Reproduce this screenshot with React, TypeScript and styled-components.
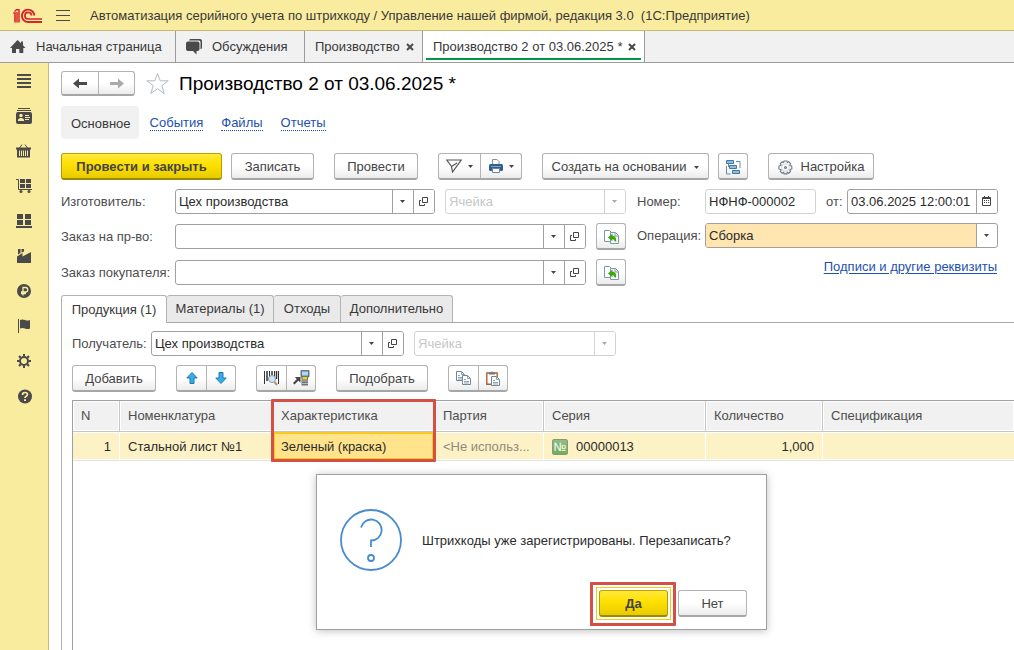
import React from "react";
import styled, { createGlobalStyle, css } from "styled-components";

const GlobalStyle = createGlobalStyle`
  *, *::before, *::after { box-sizing: border-box; }
  body {
    margin: 0;
    background: #fff;
    color: #383838;
    font: 13px/16px "Liberation Sans", Arial, sans-serif;
  }
  button, input, select { font: inherit; color: inherit; margin: 0; }
  svg { display: block; flex: none; }
`;

/* ---------- shell ---------- */

const Page = styled.div`
  position: relative;
  display: flex;
  flex-direction: column;
  min-height: 100vh;
  overflow: hidden;
`;

const TitleBar = styled.header`
  display: flex;
  align-items: center;
  height: 31px;
  padding: 1px 0 0 13px;
  background: #faec9f;
  border-bottom: 1px solid #c6ba77;
`;

const MenuButton = styled.button`
  padding: 0;
  margin: 0 20px 0 13px;
  border: 0;
  background: none;
`;

const WindowTabs = styled.nav`
  display: flex;
  height: 32px;
  background: #f1f1f1;
  border-bottom: 1px solid #9c9c9c;
`;

const WindowTab = styled.button<{ $width: number; $active?: boolean }>`
  position: relative;
  display: flex;
  align-items: center;
  justify-content: space-between;
  flex: none;
  width: ${(p) => p.$width}px;
  padding: 0 8px 0 10px;
  border: 0;
  border-right: 1px solid #9c9c9c;
  background: ${(p) => (p.$active ? "#fff" : "transparent")};
  white-space: nowrap;
  ${(p) =>
    p.$active &&
    css`
      &::after {
        content: "";
        position: absolute;
        left: 3px;
        right: 3px;
        bottom: 2px;
        height: 2px;
        background: #009646;
      }
    `}
`;

const TabWithIcon = styled(WindowTab)`
  justify-content: flex-start;
  gap: 10px;
`;

const Body = styled.div`
  display: flex;
  flex: 1;
`;

const Sidebar = styled.nav`
  display: flex;
  flex-direction: column;
  flex: none;
  width: 49px;
  background: #faec9f;
  border-right: 1px solid #c6ba77;
`;

const SideButton = styled.button`
  display: flex;
  align-items: center;
  justify-content: center;
  height: 35px;
  padding: 0;
  border: 0;
  background: none;
`;

const Main = styled.main`
  display: flex;
  flex-direction: column;
  flex: 1;
  min-width: 0;
  padding: 8px 0 0 12px;
`;

/* ---------- buttons ---------- */

const raised = css`
  height: 27px;
  border: 1px solid #b3b3b3;
  border-bottom: 2px solid #a6a6a6;
  border-radius: 3px;
  background: linear-gradient(#fff 0%, #fff 50%, #ececec 100%);
`;

const Button = styled.button<{ $width: number }>`
  ${raised}
  display: flex;
  align-items: center;
  justify-content: center;
  gap: 8px;
  flex: none;
  width: ${(p) => p.$width}px;
  padding: 2px 0 0;
  color: #444;
  white-space: nowrap;
`;

const PrimaryButton = styled(Button)`
  border-color: #b9a400 #b09c00 #9b8900;
  background: linear-gradient(#ffe93a 0%, #ffe000 45%, #e8cb00 100%);
  font-weight: bold;
`;

const Split = styled.div`
  ${raised}
  display: flex;
  flex: none;
`;

const SplitButton = styled.button<{ $width: number }>`
  display: flex;
  align-items: center;
  justify-content: center;
  gap: 6px;
  width: ${(p) => p.$width}px;
  padding: 0;
  border: 0;
  background: none;
  & + & { border-left: 1px solid #b3b3b3; }
`;

const Toolbar = styled.div`
  display: flex;
  gap: 20px;
`;

const ButtonGroup = styled.div`
  display: flex;
  gap: 9px;
`;

/* ---------- heading ---------- */

const Heading = styled.div`
  display: flex;
  align-items: center;
  height: 25px;
`;

const History = styled(Split)`
  height: 25px;
`;

const StarButton = styled.button`
  margin: 0 9px 0 10px;
  padding: 0;
  border: 0;
  background: none;
`;

const Title = styled.h1`
  margin: 0;
  color: #000;
  font-size: 19px;
  font-weight: normal;
  line-height: 24px;
`;

const Sections = styled.nav`
  display: flex;
  align-items: center;
  gap: 18px;
  margin: 10px 0 14px;
`;

const CurrentSection = styled.span`
  padding: 10px 8px 7px 10px;
  margin-right: -7px;
  border-radius: 4px;
  background: #f1f1f1;
`;

const SectionLink = styled.a`
  padding-top: 2px;
  color: #1d50b0;
  text-decoration: none;
  line-height: 14px;
  border-bottom: 1px dotted #1d50b0;
`;

/* ---------- form ---------- */

const Form = styled.div`
  display: grid;
  grid-template-columns: minmax(0, 1fr) 361px;
  column-gap: 11px;
  margin: 9px 16px 9px 0;
`;

const FormColumn = styled.div`
  display: flex;
  flex-direction: column;
  gap: 9px;
`;

const FormRow = styled.div<{ $tall?: boolean }>`
  display: flex;
  align-items: center;
  height: ${(p) => (p.$tall ? 27 : 25)}px;
`;

const Label = styled.label<{ $width?: number }>`
  flex: none;
  width: ${(p) => (p.$width ? `${p.$width}px` : "auto")};
  color: #4d4d4d;
  white-space: nowrap;
`;

const FieldBox = styled.div<{ $width?: number; $muted?: boolean; $filled?: boolean; $spaced?: boolean }>`
  display: flex;
  flex: ${(p) => (p.$width ? `0 0 ${p.$width}px` : "1")};
  min-width: 0;
  height: 25px;
  margin-right: ${(p) => (p.$spaced ? 10 : 0)}px;
  border: 1px solid ${(p) => (p.$muted ? "#d2d2d2" : "#a0a0a0")};
  border-radius: 3px;
  background: #fff;
  overflow: hidden;
  > button, > span { border-left: 1px solid ${(p) => (p.$muted ? "#d2d2d2" : "#a0a0a0")}; }
  > select { background: ${(p) => (p.$filled ? "#ffe6b0" : "#fff")}; }
`;

const control = css`
  flex: 1;
  width: 0;
  min-width: 0;
  padding: 0 3px;
  border: 0;
  outline: 0;
  color: #2b2b2b;
`;

const TextInput = styled.input`
  ${control}
  background: none;
  &::placeholder { color: #c6c6c6; opacity: 1; }
`;

const Select = styled.select`
  ${control}
  appearance: none;
`;

const FieldButton = styled.button`
  display: flex;
  align-items: center;
  justify-content: center;
  width: 21px;
  padding: 0 1px 1px 0;
  border: 0;
  background: #fff;
`;

const SelectArrow = styled.span`
  display: flex;
  align-items: center;
  justify-content: center;
  width: 21px;
  padding: 0 1px 1px 0;
`;

const DetailsLink = styled.a`
  align-self: flex-end;
  margin-right: 1px;
  color: #1d50b0;
  line-height: 20px;
  text-underline-offset: 2px;
`;

/* ---------- tab panel ---------- */

const TabList = styled.div`
  display: flex;
  height: 28px;
  border-bottom: 1px solid #a8a8a8;
`;

const Tab = styled.button<{ $width: number; $active?: boolean }>`
  width: ${(p) => p.$width}px;
  height: ${(p) => (p.$active ? 28 : 27)}px;
  padding: 0;
  border: 1px solid #b3b3b3;
  border-left-width: ${(p) => (p.$active ? 1 : 0)}px;
  border-bottom: 0;
  border-radius: 3px 3px 0 0;
  background: ${(p) => (p.$active ? "#fff" : "#eaeaea")};
`;

const Panel = styled.section`
  display: flex;
  flex: 1;
  flex-direction: column;
  gap: 9px;
  padding: 8px 0 0 10px;
  border-left: 1px solid #b3b3b3;
`;

const TableArea = styled.div`
  flex: 1;
  margin-top: -1px;
  border-top: 1px solid #a0a0a0;
  border-left: 1px solid #a0a0a0;
`;

const Table = styled.table`
  width: 100%;
  table-layout: fixed;
  border-spacing: 0;
`;

const HeadCell = styled.th<{ $width?: number; $marked?: boolean }>`
  position: relative;
  width: ${(p) => (p.$width ? `${p.$width}px` : "auto")};
  height: 31px;
  padding: 0 8px;
  border-right: 1px solid #c6c6c6;
  border-bottom: 1px solid #c6c6c6;
  background: #f1f1f1;
  box-shadow: inset 0 0 0 1px #fff;
  color: #4d4d4d;
  font-weight: normal;
  text-align: left;
  &:last-child { border-right: 0; }
  ${(p) =>
    p.$marked &&
    css`
      &::after {
        content: "";
        position: absolute;
        z-index: 1;
        top: -2px;
        left: -2px;
        right: -2px;
        height: 63px;
        border: 3px solid #d25045;
        border-radius: 1px;
      }
    `}
`;

const Cell = styled.td<{ $right?: boolean; $muted?: boolean; $current?: boolean }>`
  height: 29px;
  padding: 1px 8px 0;
  border-right: 1px solid #fff;
  border-bottom: 1px solid #e2e2e2;
  background: ${(p) => (p.$current ? "#ffe48c" : "#fdf1c6")};
  box-shadow: ${(p) => (p.$current ? "inset 0 0 0 2px #fac81e" : "inset 0 1px #fff, inset 0 -1px #fff")};
  color: ${(p) => (p.$muted ? "#8f8a7c" : "#2b2b2b")};
  text-align: ${(p) => (p.$right ? "right" : "left")};
  white-space: nowrap;
  &:last-child { border-right: 0; }
`;

const Series = styled.span`
  display: flex;
  align-items: center;
  gap: 8px;
`;

const SeriesBadge = styled.span`
  display: flex;
  align-items: center;
  justify-content: center;
  width: 16px;
  height: 16px;
  border: 1px solid #8b9586;
  border-radius: 2px;
  background: linear-gradient(#93bd80, #6fae52);
  color: #fff;
  font-size: 12px;
  line-height: 14px;
`;

/* ---------- dialog ---------- */

const Dialog = styled.div`
  position: absolute;
  z-index: 2;
  top: 474px;
  left: 316px;
  display: flex;
  flex-direction: column;
  width: 451px;
  height: 156px;
  padding: 34px 19px 12px 23px;
  border: 1px solid #a0a0a0;
  background: #fff;
  box-shadow: 0 1px 8px rgba(0, 0, 0, 0.25);
`;

const Message = styled.div`
  display: flex;
  align-items: center;
  gap: 20px;
  color: #2b2b2b;
`;

const MessageText = styled.span`
  padding-top: 2px;
`;

const DialogActions = styled.div`
  display: flex;
  justify-content: flex-end;
  gap: 10px;
  margin-top: auto;
`;

const FocusFrame = styled.div`
  position: relative;
  &::before, &::after {
    content: "";
    position: absolute;
    pointer-events: none;
  }
  &::before { inset: -3px; border: 1px solid #f5c814; }
  &::after { inset: -8px -8px -9px -9px; border: 3px solid #d25045; border-radius: 1px; }
`;

/* ---------- icons ---------- */

const dark = "#4a4a4a";

const Logo = () => (
  <svg width="30" height="16" viewBox="0 0 30 16" fill="none" stroke="#d8232a">
    <path d="M.3 5H2v9.500" strokeWidth="1.600" />
    <path d="M1.500 3.500 3.500 1.800H6V14.500M4 4v10.500" strokeWidth="1.500" />
    <path d="M21.300 7.500a6.200 6.200 0 1 0-6.200 6.500H29" strokeWidth="1.900" />
    <path d="M18.500 7.500a3.300 3.300 0 1 0-3.400 3.500H29" strokeWidth="1.700" />
  </svg>
);

const Burger = () => (
  <svg width="14" height="12" viewBox="0 0 14 12" stroke={dark}>
    <path d="M0 .5h14M0 5.500h14M0 10.500h14" />
  </svg>
);

const Home = () => (
  <svg width="16" height="14" viewBox="0 0 16 14" fill={dark}>
    <path d="M7.500 0 11 3.300V1.500h2v3.700L15.500 8H13.300v5H9.300V9H6v4H2V8H0z" />
  </svg>
);

const Chat = () => (
  <svg width="16" height="16" viewBox="0 0 16 16" fill={dark}>
    <path d="M4.500 0H14q2 0 2 2v6.500q0 1.500-1.500 1.700V3q0-1.500-1.500-1.500H3Q3.200 0 4.500 0z" />
    <path d="M2 2.500h9.500q2 0 2 2v5.500q0 2-2 2H10.500V15.500L7 12H2q-2 0-2-2V4.500q0-2 2-2z" />
  </svg>
);

const Close = () => (
  <svg width="8" height="8" viewBox="0 0 8 8" stroke={dark} strokeWidth="2">
    <path d="m1 1 6 6M7 1 1 7" />
  </svg>
);

const Arrow = ({ back, muted }: { back?: boolean; muted?: boolean }) => (
  <svg width="14" height="11" viewBox="0 0 14 11" fill={muted ? "#aaa" : dark}>
    <path d={back ? "M0 5.500 6 .5V4h8v3H6v3.500z" : "M14 5.500 8 .5V4H0v3h8v3.500z"} />
  </svg>
);

const Star = () => (
  <svg width="25" height="23" viewBox="0 0 25 23" fill="#fff" stroke="#b4bac4">
    <path d="m12.500 1.500 2.700 7.300h8l-6.400 4.900 2.400 7.800-6.700-4.700-6.700 4.700 2.400-7.800-6.400-4.900h8z" />
  </svg>
);

const Caret = ({ muted }: { muted?: boolean }) => (
  <svg width="5" height="3" viewBox="0 0 5 3" fill={muted ? "#aaa" : "#444"}>
    <path d="M0 0h5L2.500 3z" />
  </svg>
);

const OpenIcon = () => (
  <svg width="9" height="9" viewBox="0 0 9 9" fill="none" stroke="#444">
    <path d="M3.500.5h5v5h-5zM2 3.500H.5v5h5V7" />
  </svg>
);

const Calendar = () => (
  <svg width="9" height="10" viewBox="0 0 9 10" fill="none" stroke="#444">
    <path d="M.5 1.500h8v8h-8zM0 2.500h9M2.500 0v2M6.500 0v2M2 4.500h1M4 4.500h1M6 4.500h1M2 6.500h1M4 6.500h1M6 6.500h1" />
  </svg>
);

const Send = () => (
  <svg width="16" height="14" viewBox="0 0 16 14" fill="none" stroke="#555" strokeWidth="1.200">
    <path d="M.7 1h14.500L6.500 13 5.500 7.500zM5.500 7.500 11 4M.7 1l4.800 6.500" />
  </svg>
);

const Printer = () => (
  <svg width="14" height="15" viewBox="0 0 14 15">
    <path d="M3.500 6V.5h4.500l2 2V6" fill="#fff" stroke="#7c93a8" />
    <rect y="5" width="14" height="7" rx="1.500" fill="#2f5f8c" />
    <path d="M2 7.500h10" stroke="#7fa5c6" />
    <path d="M3.500 9.500h7v4h-7z" fill="#fff" stroke="#6c859c" />
  </svg>
);

const Structure = () => (
  <svg width="15" height="15" viewBox="0 0 15 15" fill="none">
    <path d="M10 1.500h4V8M.5 6v8h4M2.500 4v3" stroke="#5f8cae" />
    <path d="M.5.5h7v3h-7zM3.500 5.500h7v3h-7zM6.500 10.500h7v3h-7z" fill="#8dbcdc" stroke="#3f78a5" />
  </svg>
);

const SettingsIcon = () => (
  <svg width="15" height="15" viewBox="0 0 16 16" fill="none" stroke="#737984" strokeWidth="1.200">
    <path d="M6.500 1h3l.4 1.700 1.500-.8 2 2-.9 1.600L14.700 6.500v3l-2.200.9.9 1.700-2 2-1.500-.9-.4 1.600h-3l-.5-1.600-1.500.9-2-2 .9-1.700L1 9.500v-3l2.400-1-.9-1.600 2-2 1.500.8z" />
    <circle cx="8" cy="8" r="4" stroke="#d4d7db" />
    <circle cx="8" cy="8" r="1" />
  </svg>
);

const FillFrom = () => (
  <svg width="15" height="14" viewBox="0 0 15 14">
    <path d="M6 11.500H.5V.5h5L7 2v2" fill="#fff" stroke="#7f96a6" />
    <path d="M6.500 2.500h5l3 3v8h-8z" fill="#fff" stroke="#7f96a6" />
    <path d="M11 2.500V6h3.500" fill="none" stroke="#7f96a6" />
    <path d="m4 7.500 4.500-4v2.300q4 0 3.700 5.700H10.500Q10.700 9 8.500 9v2.300z" fill="#37a90b" />
  </svg>
);

const MoveArrow = ({ down }: { down?: boolean }) => (
  <svg width="12" height="12" viewBox="0 0 12 12">
    <path
      d={down ? "M6 11.500 .8 6H4V.5h4V6h3.200z" : "M6 .5.8 6H4v5.500h4V6h3.200z"}
      fill="#35aeea"
      stroke="#2076b4"
    />
  </svg>
);

const BarcodeSearch = () => (
  <svg width="15" height="16" viewBox="0 0 15 16">
    <path d="M.5 1v13M5.500 1v8M10.500 1v5M14.500 1v13" stroke="#333" />
    <path d="M3 1v10M8 1v4M12.500 1v8" stroke="#333" strokeWidth="1.500" />
    <circle cx="8" cy="9" r="3.500" fill="#cfe6f7" stroke="#8699b0" />
    <path d="m10.500 12 2.500 3" stroke="#c98a5c" strokeWidth="2" />
  </svg>
);

const Terminal = () => (
  <svg width="17" height="16" viewBox="0 0 17 16">
    <path d="m.7 13.800 5-5" stroke="#444" strokeWidth="2.200" />
    <path d="M1.800 7H7.500v5.700z" fill="#444" />
    <path d="M7.500 1q0-1 1-1h7q1 0 1 1v5.500L15 8v7.500H8.500V8l-1-1.500z" fill="#6d747c" />
    <path d="M9 1.500h6V5.500H9z" fill="#9fdcff" />
    <path d="M9.500 7h4.500v2.500H9.500z" fill="#f5d30a" />
    <path d="M9.500 11h1M11.500 11h1M13.500 11h1M9.500 13.500h1M11.500 13.500h1M13.500 13.500h1" stroke="#fff" />
  </svg>
);

const Sheet = ({ x, y }: { x: number; y: number }) => (
  <g transform={`translate(${x} ${y})`}>
    <path d="M.5.5h5l3 3v6h-8z" fill="#fff" stroke="#6f889b" />
    <path d="M5.500.5v3h3M2 4.500h2M2 6.500h5M2 8h5" fill="none" stroke="#8da3b3" />
  </g>
);

const Copy = () => (
  <svg width="15" height="15" viewBox="0 0 15 15">
    <Sheet x={0} y={0} />
    <Sheet x={6} y={4} />
  </svg>
);

const Paste = () => (
  <svg width="14" height="15" viewBox="0 0 14 15">
    <path d="M.8 2h10.400v11.200H.8z" fill="#fff" stroke="#a8622f" strokeWidth="1.400" />
    <path d="M3 3.500V1.500h2L6 0l1 1.500h2v2z" fill="#777" />
    <Sheet x={5} y={5} />
  </svg>
);

const Question = () => (
  <svg width="62" height="62" viewBox="0 0 62 62" fill="none" stroke="#4a8bd0" strokeWidth="1.800">
    <circle cx="31" cy="31" r="30" />
    <path d="M21 18.500a10.500 10.500 0 1 1 10 13V38" />
    <circle cx="31" cy="49" r="3" />
  </svg>
);

const sideIcons: { name: string; icon: React.ReactNode }[] = [
  {
    name: "Главное",
    icon: <path d="M1 2h14M1 6h14M1 10h14M1 14h14" stroke={dark} strokeWidth="2" />,
  },
  {
    name: "CRM",
    icon: (
      <>
        <path d="M2 .5h12M1 2.500h14" stroke={dark} />
        <rect y="4" width="16" height="12" rx="2" fill={dark} />
        <circle cx="5" cy="7.500" r="1.700" fill="#faec9f" />
        <path d="M2 13v-1.500L4 10h2l2 1.500V13z" fill="#faec9f" />
        <path d="M9 7.500h4M9 9.500h5M9 11.500h4" stroke="#faec9f" />
      </>
    ),
  },
  {
    name: "Продажи",
    icon: (
      <>
        <path d="M3.500 5 6 1.500M11.500 5 9 1.500" stroke={dark} />
        <path d="M0 4.500h15v2h-1v8H1v-8H0z" fill={dark} />
        <path d="M3.500 7.500V13M5.500 7.500V13M7.500 7.500V13M9.500 7.500V13M11.500 7.500V13" stroke="#faec9f" />
      </>
    ),
  },
  {
    name: "Закупки",
    icon: (
      <>
        <path d="M0 1.500h2.500v10H16" fill="none" stroke={dark} />
        <path d="M4 1h5v4H4zM10 1h5v4h-5zM4 6h5v4H4zM10 6h5v4h-5z" fill={dark} />
        <circle cx="5" cy="13.500" r="1.500" fill={dark} />
        <circle cx="13" cy="13.500" r="1.500" fill={dark} />
      </>
    ),
  },
  {
    name: "Склад",
    icon: <path d="M1 1h6v5H1zM9 1h6v5H9zM1 7h6v5H1zM9 7h6v5H9zM0 13h16v2H0z" fill={dark} />,
  },
  {
    name: "Производство",
    icon: <path d="M1 15V8.500L6.500 5v3.500L15 4v11zM2 1h2.500v4L2 6.500zM5.500 1H8v2.500L5.500 4.500z" fill={dark} />,
  },
  {
    name: "Деньги",
    icon: (
      <>
        <circle cx="8" cy="8" r="7" fill={dark} />
        <path d="M7 12.500V4.500h2.500a2 2 0 0 1 0 4.500H5M5 10.500h5" fill="none" stroke="#faec9f" strokeWidth="1.300" />
      </>
    ),
  },
  {
    name: "Компания",
    icon: (
      <>
        <path d="M2.500 1v14" stroke={dark} />
        <path d="M4 2q2.500-1 5 0t5 0v8.500q-2.500 1-5 0t-5 0z" fill={dark} />
      </>
    ),
  },
  {
    name: "Настройки",
    icon: (
      <>
        <circle cx="8" cy="8" r="4" fill="none" stroke={dark} strokeWidth="2" />
        <path
          d="M8 1v3M8 12v3M1 8h3M12 8h3M3 3l2.200 2.200M10.800 10.800 13 13M13 3l-2.200 2.200M5.200 10.800 3 13"
          stroke={dark}
          strokeWidth="2"
        />
      </>
    ),
  },
  {
    name: "Справка",
    icon: (
      <>
        <circle cx="9" cy="8.500" r="7" fill={dark} />
        <path d="M6.500 7q0-2.500 2.500-2.500t2.500 2q0 1-1.300 1.800T9 10" fill="none" stroke="#faec9f" strokeWidth="1.700" />
        <path d="M8 11.300h2V13H8z" fill="#faec9f" />
      </>
    ),
  },
];

/* ---------- composed parts ---------- */

interface FieldProps {
  id: string;
  label: string;
  value?: string;
  width?: number;
}

const LookupField = ({ id, label, value, width }: FieldProps) => (
  <FieldBox $width={width} $spaced>
    <TextInput id={id} defaultValue={value} />
    <FieldButton aria-label={`${label}: выбрать`}>
      <Caret />
    </FieldButton>
    <FieldButton aria-label={`${label}: открыть`}>
      <OpenIcon />
    </FieldButton>
  </FieldBox>
);

const StorageField = ({ width }: { width?: number }) => (
  <FieldBox $width={width} $muted>
    <TextInput aria-label="Ячейка" placeholder="Ячейка" disabled />
    <FieldButton aria-label="Выбрать ячейку" disabled>
      <Caret muted />
    </FieldButton>
  </FieldBox>
);

const columns: { title: string; width?: number; marked?: boolean }[] = [
  { title: "N", width: 47 },
  { title: "Номенклатура", width: 153 },
  { title: "Характеристика", width: 162, marked: true },
  { title: "Партия", width: 109 },
  { title: "Серия", width: 162 },
  { title: "Количество", width: 117 },
  { title: "Спецификация" },
];

export default function App() {
  return (
    <>
      <GlobalStyle />
      <Page>
        <TitleBar>
          <Logo />
          <MenuButton aria-label="Меню">
            <Burger />
          </MenuButton>
          Автоматизация серийного учета по штрихкоду / Управление нашей фирмой, редакция 3.0&nbsp; (1С:Предприятие)
        </TitleBar>

        <WindowTabs>
          <TabWithIcon $width={176}>
            <Home />
            Начальная страница
          </TabWithIcon>
          <TabWithIcon $width={129}>
            <Chat />
            Обсуждения
          </TabWithIcon>
          <WindowTab $width={118}>
            Производство
            <Close />
          </WindowTab>
          <WindowTab $width={222} $active>
            Производство 2 от 03.06.2025 *
            <Close />
          </WindowTab>
        </WindowTabs>

        <Body>
          <Sidebar>
            {sideIcons.map(({ name, icon }) => (
              <SideButton key={name} aria-label={name}>
                <svg width="16" height="16" viewBox="0 0 16 16" overflow="visible">
                  {icon}
                </svg>
              </SideButton>
            ))}
          </Sidebar>

          <Main>
            <Heading>
              <History>
                <SplitButton $width={36} aria-label="Назад">
                  <Arrow back />
                </SplitButton>
                <SplitButton $width={36} aria-label="Вперед">
                  <Arrow muted />
                </SplitButton>
              </History>
              <StarButton aria-label="В избранное">
                <Star />
              </StarButton>
              <Title>Производство 2 от 03.06.2025 *</Title>
            </Heading>

            <Sections>
              <CurrentSection>Основное</CurrentSection>
              <SectionLink href="#events">События</SectionLink>
              <SectionLink href="#files">Файлы</SectionLink>
              <SectionLink href="#reports">Отчеты</SectionLink>
            </Sections>

            <Toolbar>
              <ButtonGroup>
                <PrimaryButton $width={161}>Провести и закрыть</PrimaryButton>
                <Button $width={83}>Записать</Button>
              </ButtonGroup>
              <Button $width={84}>Провести</Button>
              <Split>
                <SplitButton $width={41} aria-label="Отправить">
                  <Send />
                  <Caret />
                </SplitButton>
                <SplitButton $width={41} aria-label="Печать">
                  <Printer />
                  <Caret />
                </SplitButton>
              </Split>
              <ButtonGroup>
                <Button $width={167}>
                  Создать на основании
                  <Caret />
                </Button>
                <Button $width={30} aria-label="Структура подчиненности">
                  <Structure />
                </Button>
              </ButtonGroup>
              <Button $width={106}>
                <SettingsIcon />
                Настройка
              </Button>
            </Toolbar>

            <Form>
              <FormColumn>
                <FormRow>
                  <Label htmlFor="maker" $width={114}>Изготовитель:</Label>
                  <LookupField id="maker" label="Изготовитель" value="Цех производства" />
                  <StorageField width={181} />
                </FormRow>
                <FormRow $tall>
                  <Label htmlFor="production-order" $width={114}>Заказ на пр-во:</Label>
                  <LookupField id="production-order" label="Заказ на пр-во" />
                  <Button $width={30} aria-label="Заполнить по заказу на производство">
                    <FillFrom />
                  </Button>
                </FormRow>
                <FormRow $tall>
                  <Label htmlFor="customer-order" $width={114}>Заказ покупателя:</Label>
                  <LookupField id="customer-order" label="Заказ покупателя" />
                  <Button $width={30} aria-label="Заполнить по заказу покупателя">
                    <FillFrom />
                  </Button>
                </FormRow>
              </FormColumn>
              <FormColumn>
                <FormRow>
                  <Label htmlFor="number" $width={68}>Номер:</Label>
                  <FieldBox $width={111} $muted $spaced>
                    <TextInput id="number" defaultValue="НФНФ-000002" />
                  </FieldBox>
                  <Label htmlFor="date" $width={21}>от:</Label>
                  <FieldBox>
                    <TextInput id="date" defaultValue="03.06.2025 12:00:01" />
                    <FieldButton aria-label="Календарь">
                      <Calendar />
                    </FieldButton>
                  </FieldBox>
                </FormRow>
                <FormRow>
                  <Label htmlFor="operation" $width={68}>Операция:</Label>
                  <FieldBox $filled>
                    <Select id="operation">
                      <option>Сборка</option>
                    </Select>
                    <SelectArrow>
                      <Caret />
                    </SelectArrow>
                  </FieldBox>
                </FormRow>
                <DetailsLink href="#details">Подписи и другие реквизиты</DetailsLink>
              </FormColumn>
            </Form>

            <TabList role="tablist">
              <Tab role="tab" aria-selected $width={106} $active>Продукция (1)</Tab>
              <Tab role="tab" $width={107}>Материалы (1)</Tab>
              <Tab role="tab" $width={67}>Отходы</Tab>
              <Tab role="tab" $width={112}>Дополнительно</Tab>
            </TabList>

            <Panel>
              <FormRow>
                <Label htmlFor="recipient" $width={79}>Получатель:</Label>
                <LookupField id="recipient" label="Получатель" value="Цех производства" width={253} />
                <StorageField width={202} />
              </FormRow>
              <Toolbar>
                <Button $width={84}>Добавить</Button>
                <Split>
                  <SplitButton $width={29} aria-label="Переместить вверх">
                    <MoveArrow />
                  </SplitButton>
                  <SplitButton $width={29} aria-label="Переместить вниз">
                    <MoveArrow down />
                  </SplitButton>
                </Split>
                <Split>
                  <SplitButton $width={29} aria-label="Поиск по штрихкоду">
                    <BarcodeSearch />
                  </SplitButton>
                  <SplitButton $width={29} aria-label="Загрузить из терминала">
                    <Terminal />
                  </SplitButton>
                </Split>
                <Button $width={92}>Подобрать</Button>
                <Split>
                  <SplitButton $width={29} aria-label="Копировать строки">
                    <Copy />
                  </SplitButton>
                  <SplitButton $width={29} aria-label="Вставить строки">
                    <Paste />
                  </SplitButton>
                </Split>
              </Toolbar>
              <TableArea>
                <Table>
                  <thead>
                    <tr>
                      {columns.map((c) => (
                        <HeadCell key={c.title} $width={c.width} $marked={c.marked}>
                          {c.title}
                        </HeadCell>
                      ))}
                    </tr>
                  </thead>
                  <tbody>
                    <tr>
                      <Cell $right>1</Cell>
                      <Cell>Стальной лист №1</Cell>
                      <Cell $current>Зеленый (краска)</Cell>
                      <Cell $muted>&lt;Не использ...</Cell>
                      <Cell>
                        <Series>
                          <SeriesBadge>№</SeriesBadge>
                          00000013
                        </Series>
                      </Cell>
                      <Cell $right>1,000</Cell>
                      <Cell />
                    </tr>
                  </tbody>
                </Table>
              </TableArea>
            </Panel>
          </Main>
        </Body>

        <Dialog role="dialog" aria-labelledby="dialog-message">
          <Message>
            <Question />
            <MessageText id="dialog-message">Штрихкоды уже зарегистрированы. Перезаписать?</MessageText>
          </Message>
          <DialogActions>
            <FocusFrame>
              <PrimaryButton $width={69}>Да</PrimaryButton>
            </FocusFrame>
            <Button $width={69}>Нет</Button>
          </DialogActions>
        </Dialog>
      </Page>
    </>
  );
}
